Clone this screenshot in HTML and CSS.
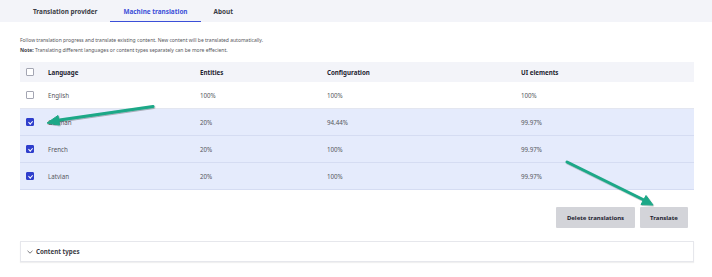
FILE: index.html
```html
<!DOCTYPE html>
<html>
<head>
<meta charset="utf-8">
<link rel="stylesheet" href="styles.css">
</head>
<body>
<div class="page">
  <nav class="tabs">
    <a class="tab">Translation provider</a>
    <a class="tab active">Machine translation</a>
    <a class="tab">About</a>
  </nav>
  <div class="intro">
    <p>Follow translation progress and translate existing content. New content will be translated automatically.</p>
    <p><b>Note:</b> Translating different languages or content types separately can be more effecient.</p>
  </div>
  <div class="table">
    <div class="row head">
      <span class="cb"></span>
      <span>Language</span>
      <span>Entities</span>
      <span>Configuration</span>
      <span>UI elements</span>
    </div>
    <div class="row">
      <span class="cb"></span>
      <span>English</span>
      <span>100%</span>
      <span>100%</span>
      <span>100%</span>
    </div>
    <div class="row sel">
      <span class="cb on"></span>
      <span>German</span>
      <span>20%</span>
      <span>94.44%</span>
      <span>99.97%</span>
    </div>
    <div class="row sel">
      <span class="cb on"></span>
      <span>French</span>
      <span>20%</span>
      <span>100%</span>
      <span>99.97%</span>
    </div>
    <div class="row sel last">
      <span class="cb on"></span>
      <span>Latvian</span>
      <span>20%</span>
      <span>100%</span>
      <span>99.97%</span>
    </div>
  </div>
  <div class="actions">
    <button class="btn">Delete translations</button>
    <button class="btn">Translate</button>
  </div>
  <div class="details">
    <svg class="chev" width="6" height="4" viewBox="0 0 6 4"><path d="M0.5 0.8 L3 3.2 L5.5 0.8" fill="none" stroke="#55565b" stroke-width="0.8"/></svg>
    <span>Content types</span>
  </div>
  <svg class="arrows" width="712" height="277" viewBox="0 0 712 277">
    <defs>
      <filter id="sh" x="-20%" y="-20%" width="140%" height="140%">
        <feDropShadow dx="0.6" dy="0.8" stdDeviation="0.6" flood-color="#000" flood-opacity="0.35"/>
      </filter>
    </defs>
    <g filter="url(#sh)" fill="#1ba887" stroke="#1ba887">
      <line x1="153" y1="106.5" x2="56" y2="120.5" stroke-width="3" stroke-linecap="round"/>
      <polygon points="47,123 58,115.5 59.5,125" stroke-width="1" stroke-linejoin="round"/>
      <line x1="567" y1="162" x2="644" y2="200" stroke-width="3" stroke-linecap="round"/>
      <polygon points="653,205 641,204.5 646,195.5" stroke-width="1" stroke-linejoin="round"/>
    </g>
  </svg>
</div>
</body>
</html>
```
FILE: styles.css
```css
* { box-sizing: border-box; }
html, body { margin: 0; padding: 0; background: #fff; }
body { font-family: "Noto Sans", "Open Sans", sans-serif; color: #222330; }
.page { position: relative; width: 712px; height: 277px; overflow: hidden; }

.tabs { height: 22px; background: #f3f4f9; display: flex; padding-left: 20px; }
.tab { display: flex; align-items: center; justify-content: center; height: 22px; padding: 0 13px; font-size: 6.4px; font-weight: 700; color: #3b3c45; position: relative; }
.tab.active { color: #3b4fd8; }
.tab.active::after { content: ""; position: absolute; left: 0; right: 0; bottom: 0; height: 1.5px; background: #3b4fd8; }

.intro { padding: 14px 20px 0; font-size: 5px; color: #55565b; line-height: 9.5px; }
.intro p { margin: 0; }
.intro b { color: #3b3c45; }

.table { margin: 7px 18px 0 20px; }
.row { display: grid; grid-template-columns: 28px 152px 127px 194px 1fr; align-items: center; height: 27px; border-bottom: 1px solid #e3e6f0; font-size: 6.2px; color: #55565b; }
.row.head { height: 20px; background: #f3f4f9; border-bottom: none; font-weight: 700; color: #222330; }
.row.sel { background: #e5ebfc; border-bottom-color: #d5dcf2; }
.cb { width: 8px; height: 8px; margin-left: 6px; border: 0.8px solid #a4a6b3; border-radius: 1px; background: #fff; position: relative; }
.cb.on { background: #2f3ecc; border-color: #2f3ecc; }
.cb.on::after { content: ""; position: absolute; left: 2.3px; top: 0.8px; width: 1.7px; height: 3.4px; border: solid #fff; border-width: 0 0.9px 0.9px 0; transform: rotate(45deg); }

.actions { display: flex; justify-content: flex-end; gap: 5px; padding: 17px 24px 0 0; }
.btn { height: 21px; border: none; border-radius: 1px; background: #d3d4d9; font-family: inherit; font-size: 6px; font-weight: 700; color: #222330; padding: 0; }
.btn:first-child { width: 79px; }
.btn:last-child { width: 48px; }

.details { margin: 13px 18px 0 20px; height: 21px; border: 1px solid #e6e7ec; box-shadow: 0 1px 1px rgba(0,0,0,0.06); display: flex; align-items: center; padding-left: 6px; gap: 3px; font-size: 6.2px; font-weight: 700; color: #3b3c45; }

.arrows { position: absolute; left: 0; top: 0; pointer-events: none; }
```
